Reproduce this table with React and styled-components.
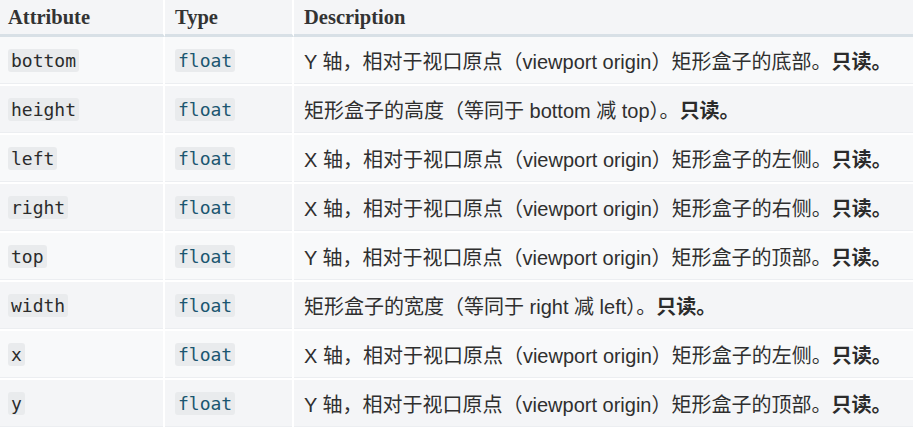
import styled, { createGlobalStyle } from "styled-components";

const GlobalStyle = createGlobalStyle`
  html, body {
    margin: 0;
    padding: 0;
    background: #ffffff;
  }
`;

const Table = styled.table`
  border-collapse: separate;
  border-spacing: 0;
  width: 913px;
  table-layout: fixed;
  font-family: "Liberation Sans", "Noto Sans CJK SC", sans-serif;
  color: #333333;
`;

const HeadCell = styled.th`
  height: 34px;
  padding: 0 0 0 ${(props) => (props.first ? "8px" : "10px")};
  text-align: left;
  vertical-align: middle;
  background: #f4f5f7;
  border-right: 2px solid #ffffff;
  border-bottom: 3px solid #d8e0e6;
  font-family: "Liberation Serif", "DejaVu Serif", serif;
  font-weight: bold;
  font-size: 20.5px;
  color: #333333;
  &:last-child {
    border-right: none;
  }
`;

const Row = styled.tr`
  background: ${(props) => (props.odd ? "#f4f5f7" : "#f8f9fa")};
`;

const Cell = styled.td`
  height: 47px;
  padding: 0 0 0 ${(props) => (props.first ? "8px" : "10px")};
  vertical-align: middle;
  border-right: 2px solid #ffffff;
  border-bottom: 2px solid #ffffff;
  box-shadow: inset 0 -1px 0 #eceef1;
  font-size: 18px;
  white-space: nowrap;
  &:last-child {
    border-right: none;
  }
`;

const Code = styled.code`
  display: inline-block;
  padding: 1px 3px;
  border-radius: 3px;
  background: #e9ebed;
  font-family: "DejaVu Sans Mono", "Liberation Mono", monospace;
  font-size: 18px;
  line-height: 21px;
  color: ${(props) => (props.type ? "#1b5670" : "#2b2b2b")};
`;

const Desc = styled.span`
  font-size: 20px;
  color: #2f2f2f;
`;

const ReadOnly = styled.strong`
  font-weight: bold;
  color: #2b2b2b;
`;

const rows = [
  { name: "bottom", desc: "Y 轴，相对于视口原点（viewport origin）矩形盒子的底部。" },
  { name: "height", desc: "矩形盒子的高度（等同于 bottom 减 top）。" },
  { name: "left", desc: "X 轴，相对于视口原点（viewport origin）矩形盒子的左侧。" },
  { name: "right", desc: "X 轴，相对于视口原点（viewport origin）矩形盒子的右侧。" },
  { name: "top", desc: "Y 轴，相对于视口原点（viewport origin）矩形盒子的顶部。" },
  { name: "width", desc: "矩形盒子的宽度（等同于 right 减 left）。" },
  { name: "x", desc: "X 轴，相对于视口原点（viewport origin）矩形盒子的左侧。" },
  { name: "y", desc: "Y 轴，相对于视口原点（viewport origin）矩形盒子的顶部。" },
];

export default function App() {
  return (
    <>
      <GlobalStyle />
      <Table>
        <colgroup>
          <col style={{ width: "165px" }} />
          <col style={{ width: "129px" }} />
          <col />
        </colgroup>
        <thead>
          <tr>
            <HeadCell first>Attribute</HeadCell>
            <HeadCell>Type</HeadCell>
            <HeadCell>Description</HeadCell>
          </tr>
        </thead>
        <tbody>
          {rows.map((row, i) => (
            <Row key={row.name} odd={i % 2 === 1}>
              <Cell first>
                <Code>{row.name}</Code>
              </Cell>
              <Cell>
                <Code type>float</Code>
              </Cell>
              <Cell>
                <Desc>
                  {row.desc}
                  <ReadOnly>只读。</ReadOnly>
                </Desc>
              </Cell>
            </Row>
          ))}
        </tbody>
      </Table>
    </>
  );
}
